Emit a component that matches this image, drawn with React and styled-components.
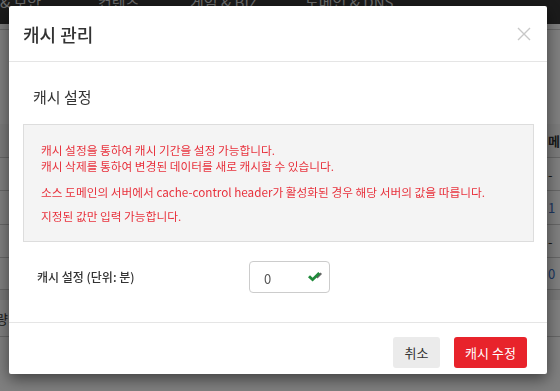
import React from 'react'
import styled, { createGlobalStyle } from 'styled-components'

const GlobalStyle = createGlobalStyle`
  html, body {
    margin: 0;
    padding: 0;
    width: 560px;
    height: 391px;
    overflow: hidden;
    background: #fff;
    font-family: 'Noto Sans CJK KR', 'Noto Sans', sans-serif;
  }
`

const Page = styled.div`
  width: 560px;
  height: 391px;
  overflow: hidden;
  display: flex;
  flex-direction: column;
`

const TopNav = styled.nav`
  height: 24px;
  background: #363636;
  display: flex;
  align-items: flex-start;
  overflow: hidden;
`

const NavItem = styled.span`
  width: ${(p) => p.width}px;
  margin-top: -9px;
  font-size: 15px;
  color: #d8d8d8;
  white-space: nowrap;
`

const SubBar = styled.div`
  height: 5px;
  border-bottom: 1px solid #d0d0d0;
`

const Table = styled.div`
  margin-top: 94px;
  display: flex;
  flex-direction: column;
`

const Row = styled.div`
  height: ${(p) => p.h}px;
  border-bottom: 1px solid ${(p) => (p.band ? 'transparent' : '#ccc')};
  background: ${(p) => (p.band ? '#f0f0f0' : p.head ? '#f7f7f7' : '#fff')};
  display: flex;
  align-items: center;
  justify-content: space-between;
  font-size: 13px;
  box-sizing: border-box;
`

const Cell = styled.span`
  color: ${(p) => (p.link ? '#3b6fc4' : '#333')};
  font-weight: ${(p) => (p.head ? 700 : 400)};
  margin: ${(p) => (p.left ? '0 0 0 -4px' : '0 -14px 0 0')};
  width: 26px;
  white-space: nowrap;
`

const Overlay = styled.div`
  position: fixed;
  inset: 0;
  background: rgba(0, 0, 0, 0.5);
  display: flex;
  align-items: flex-start;
  padding: 6px 13px 0 9px;
`

const Modal = styled.div`
  width: 538px;
  background: #fff;
  border-radius: 2px;
  box-shadow: 0 5px 15px rgba(0, 0, 0, 0.5);
  display: flex;
  flex-direction: column;
`

const Header = styled.div`
  height: 56px;
  padding: 0 16px 0 14px;
  border-bottom: 1px solid #e5e5e5;
  display: flex;
  align-items: center;
  justify-content: space-between;
  box-sizing: border-box;
`

const Title = styled.h4`
  margin: 0;
  font-size: 18px;
  font-weight: 500;
  color: #333;
`

const CloseButton = styled.button`
  border: 0;
  background: none;
  padding: 0;
  width: 14px;
  height: 14px;
  display: flex;
  cursor: pointer;
`

const Body = styled.div`
  padding: 0 13px 0 14px;
`

const SectionTitle = styled.h5`
  margin: 24px 0 0 10px;
  font-size: 15px;
  font-weight: 400;
  color: #333;
  line-height: 22px;
`

const Notice = styled.div`
  margin-top: 16px;
  height: 118px;
  box-sizing: border-box;
  background: #f4f4f4;
  border: 1px solid #dddddd;
  padding: 17px 17px;
`

const NoticeText = styled.p`
  margin: 0 0 ${(p) => p.gap}px;
  font-size: 11.7px;
  line-height: 16px;
  color: #e8313c;
`

const FormRow = styled.div`
  margin-top: 19px;
  height: 32px;
  display: flex;
  align-items: center;
`

const Label = styled.label`
  width: 226px;
  box-sizing: border-box;
  padding-left: 14px;
  font-size: 12px;
  font-weight: 500;
  color: #333;
  margin-top: -1px;
`

const InputBox = styled.div`
  width: 81px;
  height: 32px;
  box-sizing: border-box;
  border: 1px solid #cccccc;
  border-radius: 4px;
  display: flex;
  align-items: center;
  justify-content: space-between;
  padding: 0 6px 0 14px;
`

const Value = styled.span`
  font-size: 13px;
  color: #555;
  margin-top: 3px;
`

const Footer = styled.div`
  margin-top: 29px;
  border-top: 1px solid #e5e5e5;
  padding: 14px 20px 6px;
  display: flex;
  justify-content: flex-end;
  gap: 14px;
`

const Button = styled.button`
  height: 31px;
  width: ${(p) => p.w}px;
  border: 0;
  border-radius: 3px;
  font-family: inherit;
  font-size: 13px;
  padding: 0;
  background: ${(p) => (p.primary ? '#e8232b' : '#ebebeb')};
  color: ${(p) => (p.primary ? '#fff' : '#333')};
  cursor: pointer;
`

const CheckIcon = () => (
  <svg width="16" height="12" viewBox="0 0 16 12">
    <path d="M9 6 L13.5 1.5 L15 3 L10.5 7.5 Z" fill="#666" />
    <path d="M1 6.2 L3 4.3 L5.6 6.8 L11.3 1 L13.3 3 L5.6 10.6 Z" fill="#1f8a3a" />
  </svg>
)

const CloseIcon = () => (
  <svg width="14" height="14" viewBox="0 0 14 14">
    <path d="M1 1 L13 13 M13 1 L1 13" stroke="#c8c8c8" strokeWidth="1.4" />
  </svg>
)

const rows = [
  { h: 34, head: true, left: '', right: '메인' },
  { h: 33, left: '', right: '-' },
  { h: 34, left: '', right: '1', link: true },
  { h: 33, left: '', right: '-' },
  { h: 32, left: '', right: '0', link: true },
  { h: 10, band: true, left: '', right: '' },
  { h: 37, left: '량', right: '' }
]

export default function App() {
  return (
    <>
      <GlobalStyle />
      <Page>
        <TopNav>
          <NavItem width={98}>&amp; 보안</NavItem>
          <NavItem width={92}>컨텐츠</NavItem>
          <NavItem width={115}>게임 &amp; BIZ</NavItem>
          <NavItem width={120}>도메인 &amp; DNS</NavItem>
        </TopNav>
        <SubBar />
        <Table>
          {rows.map((r, i) => (
            <Row key={i} h={r.h} head={r.head} band={r.band}>
              <Cell left>{r.left}</Cell>
              <Cell head={r.head} link={r.link}>
                {r.right}
              </Cell>
            </Row>
          ))}
        </Table>
      </Page>
      <Overlay>
        <Modal>
          <Header>
            <Title>캐시 관리</Title>
            <CloseButton aria-label="닫기">
              <CloseIcon />
            </CloseButton>
          </Header>
          <Body>
            <SectionTitle>캐시 설정</SectionTitle>
            <Notice>
              <NoticeText gap={10}>
                캐시 설정을 통하여 캐시 기간을 설정 가능합니다.
                <br />
                캐시 삭제를 통하여 변경된 데이터를 새로 캐시할 수 있습니다.
              </NoticeText>
              <NoticeText gap={8}>
                소스 도메인의 서버에서 cache-control header가 활성화된 경우 해당 서버의 값을 따릅니다.
              </NoticeText>
              <NoticeText gap={0}>지정된 값만 입력 가능합니다.</NoticeText>
            </Notice>
            <FormRow>
              <Label>캐시 설정 (단위: 분)</Label>
              <InputBox>
                <Value>0</Value>
                <CheckIcon />
              </InputBox>
            </FormRow>
          </Body>
          <Footer>
            <Button w={47}>취소</Button>
            <Button w={73} primary>
              캐시 수정
            </Button>
          </Footer>
        </Modal>
      </Overlay>
    </>
  )
}
